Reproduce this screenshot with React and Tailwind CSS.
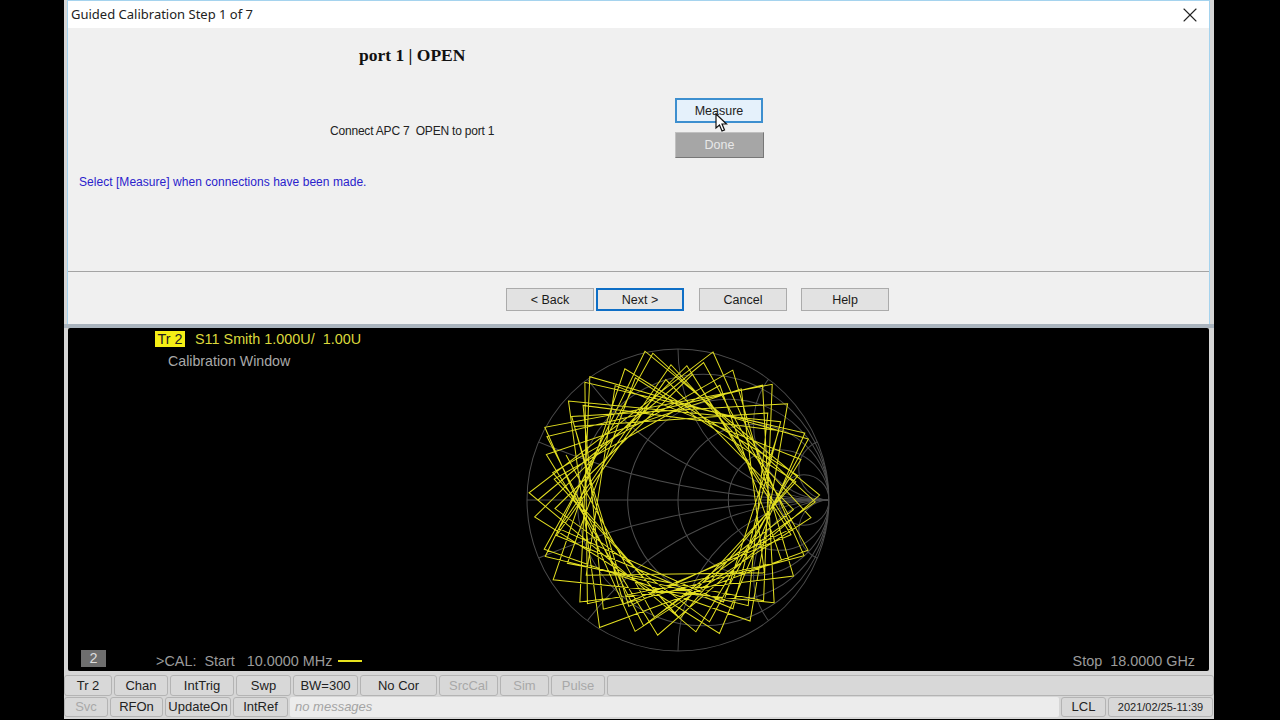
import React from "react";
import { X } from "lucide-react";

const row1 = [
  { t: "Tr 2", w: "w-[48px]" },
  { t: "Chan", w: "w-[54px]" },
  { t: "IntTrig", w: "w-[64px]" },
  { t: "Swp", w: "w-[55px]" },
  { t: "BW=300", w: "w-[65px]" },
  { t: "No Cor", w: "w-[77px]" },
  { t: "SrcCal", w: "w-[59px]", off: true },
  { t: "Sim", w: "w-[49px]", off: true },
  { t: "Pulse", w: "w-[54px]", off: true },
];

const row2 = [
  { t: "Svc", w: "w-[44px]", off: true },
  { t: "RFOn", w: "w-[53px]" },
  { t: "UpdateOn", w: "w-[66px]" },
  { t: "IntRef", w: "w-[55px]" },
];

// trace: a long polyline that keeps turning by about 100 degrees
function tracePoints() {
  const pts = [];
  for (let k = 0; k < 80; k++) {
    const a = ((180 + k * 100.53) * Math.PI) / 180;
    const r = 132 + 14 * Math.sin(k * 0.61) + 7 * Math.cos(k * 1.73);
    pts.push(`${(150 + r * Math.cos(a)).toFixed(1)},${(150 + r * Math.sin(a)).toFixed(1)}`);
  }
  return pts.join(" ");
}

function SmithChart() {
  const R = 150;
  const rs = [0.2, 0.5, 1, 2, 5];
  const xs = [0.2, 0.5, 1, 2, 5];
  return (
    <svg width="304" height="304" viewBox="-1 -1 302 302" className="absolute left-[458px] top-[20px]">
      <defs>
        <clipPath id="unit">
          <circle cx="150" cy="150" r="150" />
        </clipPath>
      </defs>
      <g fill="none" stroke="#4c4c4c" strokeWidth="1">
        <circle cx="150" cy="150" r="150" />
        <line x1="0" y1="150" x2="300" y2="150" />
        <g clipPath="url(#unit)">
          {rs.map((r) => (
            <circle key={r} cx={150 + (R * r) / (1 + r)} cy="150" r={R / (1 + r)} />
          ))}
          {xs.map((x) => (
            <g key={x}>
              <circle cx="300" cy={150 - R / x} r={R / x} />
              <circle cx="300" cy={150 + R / x} r={R / x} />
            </g>
          ))}
        </g>
      </g>
      <polyline points={tracePoints()} fill="none" stroke="#e2de20" strokeWidth="1" />
    </svg>
  );
}

function Cursor() {
  return (
    <svg width="13" height="20" viewBox="0 0 13 20" className="absolute left-[38px] top-[13px]">
      <path d="M1 1 L1 15 L4.5 12 L7 18 L9.5 17 L7 11 L11.5 11 Z" fill="#fff" stroke="#111" strokeWidth="1.2" />
    </svg>
  );
}

function DlgButton({ children, active, className = "" }) {
  return (
    <div
      className={`h-[23px] w-[88px] pt-[2px] flex items-center justify-center text-[12.5px] text-[#1a1a1a] ${
        active ? "border-2 border-[#0f6fc6] bg-[#e6e6e6]" : "border border-[#ababab] bg-[#e2e2e2]"
      } ${className}`}
    >
      {children}
    </div>
  );
}

function BarButton({ t, w, off }) {
  return (
    <div
      className={`${w} h-full shrink-0 flex items-center justify-center rounded-[3px] border border-[#b4b4b4] bg-[#d8d8d8] text-[13px] ${
        off ? "text-[#a8a8a8]" : "text-[#222]"
      }`}
    >
      {t}
    </div>
  );
}

export default function App() {
  return (
    <div className="w-[1280px] h-[720px] bg-black overflow-hidden font-['Liberation_Sans',Arial,sans-serif]">
      <div className="ml-[64px] w-[1150px] h-[719px] bg-[#d6d6d6] flex flex-col">
        {/* dialog */}
        <div className="shrink-0 ml-[3px] mr-[4px] h-[324px] border-t border-x border-[#a5d3ee] bg-[#f0f0f0] flex flex-col">
          <div className="h-[27px] bg-white flex items-center justify-between pl-[3px] pr-[7px]">
            <span className="text-[13px] text-[#222] font-['Noto_Sans',sans-serif]">Guided Calibration Step 1 of 7</span>
            <X size={24} strokeWidth={1.1} className="text-[#222]" />
          </div>
          <div className="h-[243px] bg-[#f0f0f0]">
            <div className="pl-[291px] pt-[17px] h-[70px] text-[17.5px] leading-5 font-bold text-[#111] font-['Liberation_Serif',serif]">
              port 1 | OPEN
            </div>
            <div className="flex items-start h-[75px]">
              <div className="pl-[262px] w-[607px] pt-[25px] text-[12px] leading-4 tracking-[-0.2px] text-[#222]">Connect APC 7&nbsp; OPEN to port 1</div>
              <div className="flex flex-col gap-[9px]">
                <div className="relative w-[88px] h-[25px] pt-[1px] border-2 border-[#3d8fcf] bg-[#e5f1fb] flex items-center justify-center text-[12.5px] text-[#222]">
                  Measure
                  <Cursor />
                </div>
                <div className="w-[89px] h-[26px] border border-[#c0c0c0] border-b-[#777] border-r-[#777] bg-[#a6a6a6] flex items-center justify-center text-[12.5px] text-[#e8e8e8]">
                  Done
                </div>
              </div>
            </div>
            <div className="pl-[11px] pt-[1px] text-[12px] leading-4 tracking-[0.04px] text-[#2a22cc]">Select [Measure] when connections have been made.</div>
          </div>
          <div className="flex-1 border-t border-[#a4a4a4] flex items-start pt-[16px] pl-[438px]">
            <DlgButton>&lt; Back</DlgButton>
            <DlgButton active className="ml-[2px]">Next &gt;</DlgButton>
            <DlgButton className="ml-[15px]">Cancel</DlgButton>
            <DlgButton className="ml-[14px]">Help</DlgButton>
          </div>
        </div>

        <div className="shrink-0 h-[4px] bg-[#aab4be]" />

        {/* trace window */}
        <div className="shrink-0 relative ml-[4px] mr-[5px] h-[343px] bg-black rounded-[2px] flex flex-col text-[14.4px] leading-5">
          <SmithChart />
          <div className="pl-[87px] pt-[1px] flex items-center text-[#dcd83c]">
            <span className="bg-[#f5ee16] text-[#222] w-[30px] h-[16px] leading-4 text-center">Tr 2</span>
            <span className="ml-[10px] whitespace-pre">S11 Smith 1.000U/  1.00U</span>
          </div>
          <div className="pl-[100px] pt-[2px] text-[14.2px] text-[#a9a9a9]">Calibration Window</div>
          <div className="mt-auto pl-[13px] pr-[14px] flex items-end text-[#9b9b9b]">
            <div className="w-[25px] h-[17px] mb-[4px] bg-[#6e6e6e] text-[#dcdcdc] text-center leading-4">2</div>
            <span className="ml-[50px] whitespace-pre">&gt;CAL:  Start   10.0000 MHz</span>
            <span className="ml-[6px] mb-[9px] w-[24px] h-[2px] bg-[#e6e21e]" />
            <span className="ml-auto whitespace-pre">Stop  18.0000 GHz</span>
          </div>
        </div>

        {/* softkey bars */}
        <div className="shrink-0 pt-[4px] h-[21px] flex gap-[2px] box-content">
          {row1.map((b) => (
            <BarButton key={b.t} {...b} />
          ))}
          <div className="flex-1 h-full rounded-[3px] border border-[#b4b4b4] bg-[#d8d8d8]" />
        </div>
        <div className="shrink-0 pt-[1px] h-[20px] flex gap-[2px] box-content">
          {row2.map((b) => (
            <BarButton key={b.t} {...b} />
          ))}
          <div className="w-[769px] h-full shrink-0 bg-[#ececec] rounded-[2px] pl-[5px] flex items-center text-[13px] italic text-[#a4a4a4]">no messages</div>
          <BarButton t="LCL" w="w-[45px]" />
          <BarButton t="2021/02/25-11:39" w="w-[105px] !text-[11px]" />
        </div>
      </div>
    </div>
  );
}
